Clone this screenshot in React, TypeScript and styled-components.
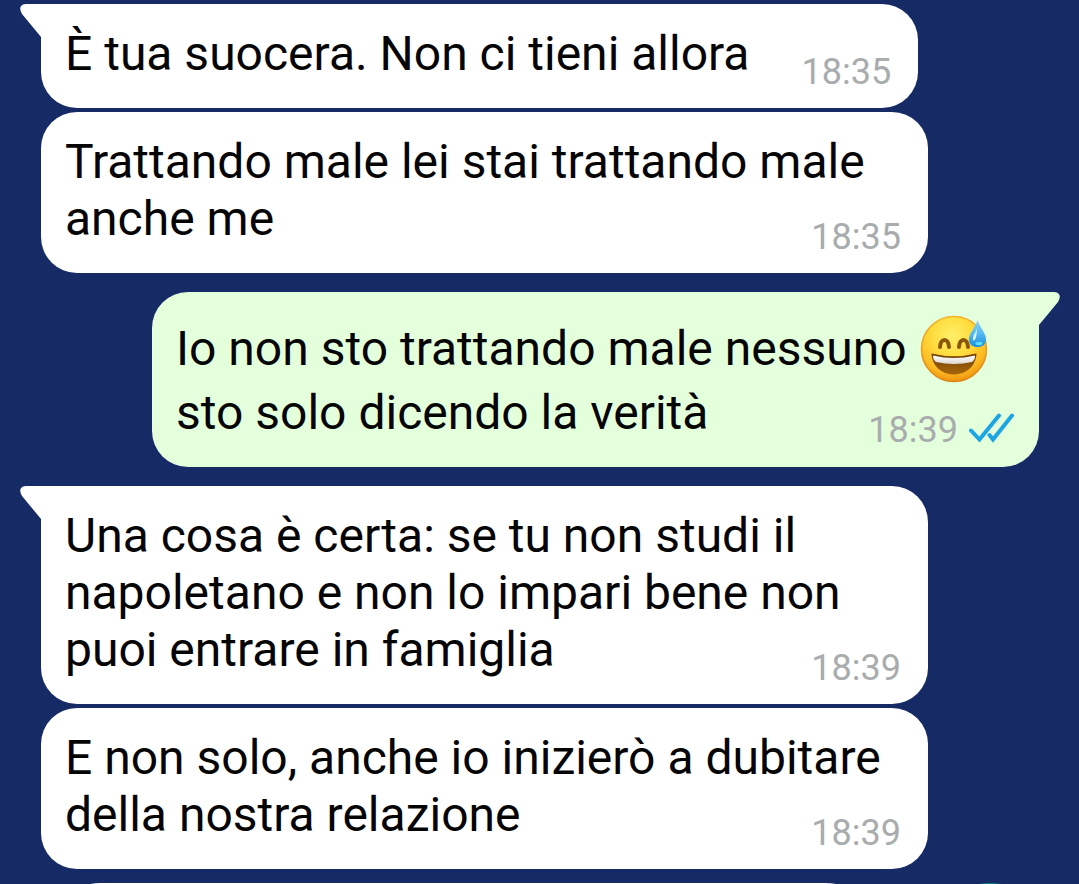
import React from "react";
import styled, { createGlobalStyle, css } from "styled-components";

const GlobalStyle = createGlobalStyle`
  *, *::before, *::after { box-sizing: border-box; }
  body {
    margin: 0;
    background: #162a66;
    font-family: Roboto, "Liberation Sans", sans-serif;
  }
`;

const Screen = styled.div`
  display: flex;
  flex-direction: column;
  height: 100vh;
  overflow: hidden;
  background: #162a66;
`;

const Conversation = styled.main`
  display: flex;
  flex: none;
  flex-direction: column;
  gap: 19px;
  padding: 4px 40px 14px 41px;
`;

const Group = styled.section<{ $sent?: boolean }>`
  display: flex;
  flex-direction: column;
  align-items: ${(p) => (p.$sent ? "flex-end" : "flex-start")};
  gap: 4px;
`;

const Bubble = styled.article<{ $sent?: boolean; $tail?: boolean }>`
  position: relative;
  max-width: calc(100% - 111px);
  padding: ${(p) => (p.$sent ? "25px 25px 16px 24px" : "21px 27px 15px 24px")};
  border-radius: 36px;
  background: ${(p) => (p.$sent ? "#e4ffdc" : "#ffffff")};
  ${(p) =>
    p.$tail &&
    (p.$sent
      ? css`
          border-top-right-radius: 0;
        `
      : css`
          border-top-left-radius: 0;
        `)}
`;

const Tail = styled.svg<{ $sent?: boolean }>`
  position: absolute;
  top: 0;
  ${(p) => (p.$sent ? "left: calc(100% - 1px);" : "right: calc(100% - 1px);")}
  width: 22px;
  height: 34px;
`;

const Text = styled.p<{ $tall?: boolean }>`
  margin: 0;
  color: #050505;
  font-size: 48px;
  line-height: ${(p) => (p.$tall ? 64 : 57)}px;
`;

/* Floats beside the last line of text, slightly below its baseline. */
const Meta = styled.span<{ $sent?: boolean }>`
  display: flex;
  float: right;
  align-items: center;
  gap: 10px;
  height: 42px;
  margin-top: ${(p) => (p.$sent ? 28 : 26)}px;
  margin-left: 52px;
  color: #a9acad;
  font-size: 36px;
  line-height: 42px;
`;

const Ticks = styled.svg`
  width: 46px;
  height: 30px;
  margin-bottom: 4px;
`;

const Emoji = styled.svg`
  width: 68px;
  height: 68px;
  margin: -10px 0 -10px 2px;
  vertical-align: -8px;
`;

const Composer = styled.form`
  display: flex;
  flex: none;
  align-items: flex-start;
  gap: 40px;
  padding: 0 24px 24px 41px;
`;

const MessageInput = styled.input`
  flex: 1;
  min-width: 0;
  height: 120px;
  padding: 0 40px;
  border: 0;
  border-radius: 60px;
  background: #ffffff;
  font: 48px Roboto, sans-serif;
`;

const MicButton = styled.button`
  flex: none;
  width: 130px;
  height: 130px;
  border: 0;
  border-radius: 50%;
  background: #0b7f7b;
`;

function BubbleTail({ sent }: { sent?: boolean }) {
  return (
    <Tail $sent={sent} viewBox="0 0 22 34" aria-hidden="true">
      {sent ? (
        <path d="M0 0H16Q20 0 21.500 3Q22.500 6 20 10L1 33V34H0Z" fill="#e4ffdc" />
      ) : (
        <path d="M22 0H6Q2 0 .5 3Q-.5 6 2 10L21 33V34H22Z" fill="#ffffff" />
      )}
    </Tail>
  );
}

function ReadTicks() {
  return (
    <Ticks viewBox="0 0 46 30" role="img" aria-label="Letto">
      <g fill="none" stroke="#1ca5e3" strokeWidth="4" strokeLinecap="round" strokeLinejoin="miter">
        <path d="M3 17.500L11.500 26.500L31 2.500" />
        <path d="M21.500 22L25 26.500L44 2.500" />
      </g>
    </Ticks>
  );
}

function SweatSmile() {
  return (
    <Emoji viewBox="0 0 68 68" role="img" aria-label="😅">
      <defs>
        <radialGradient id="face" cx="0.47" cy="0.3" r="0.72">
          <stop offset="0" stopColor="#fff06a" />
          <stop offset="0.45" stopColor="#ffdb3c" />
          <stop offset="0.78" stopColor="#fdb922" />
          <stop offset="1" stopColor="#ee8d0c" />
        </radialGradient>
        <linearGradient id="rim" x1="0" y1="0" x2="0" y2="1">
          <stop offset="0" stopColor="#f3b32b" />
          <stop offset="1" stopColor="#dd8413" />
        </linearGradient>
        <linearGradient id="mouth" x1="0" y1="0" x2="0" y2="1">
          <stop offset="0" stopColor="#6f3d05" />
          <stop offset="1" stopColor="#a8670c" />
        </linearGradient>
        <linearGradient id="teeth" x1="0" y1="0" x2="0" y2="1">
          <stop offset="0" stopColor="#ffffff" />
          <stop offset="1" stopColor="#dcd6d2" />
        </linearGradient>
        <linearGradient id="drop" x1="0" y1="0" x2="0" y2="1">
          <stop offset="0" stopColor="#8ed3f5" />
          <stop offset="0.5" stopColor="#55b9f2" />
          <stop offset="1" stopColor="#168fe0" />
        </linearGradient>
      </defs>
      <circle cx="34" cy="34" r="32.500" fill="url(#face)" stroke="url(#rim)" strokeWidth="1.500" />
      <g fill="none" stroke="#8a570b" strokeWidth="4" strokeLinecap="round">
        <path d="M20 32C20.500 22.500 28.500 22.500 29 32" />
        <path d="M39 32C39.500 22.500 47.500 22.500 48 32" />
      </g>
      <path d="M11.500 38.500Q34 44 56.500 38.500C56 50.500 47 59.500 34 59.500S12 50.500 11.500 38.500Z" fill="url(#mouth)" />
      <path d="M13 40.500Q34 45.500 55 40.500Q55 45 52 47Q34 51 16 47Q13 45 13 40.500Z" fill="url(#teeth)" />
      <path d="M57.500 5C60 12.500 66 18 66 24.500C66 29.500 62.500 32 57.500 32S49 29.500 49 24.500C49 18 55.500 12.500 57.500 5Z" fill="url(#drop)" />
      <path d="M57 13C56 18 52.500 20 53 25C55 27 57 22 57 13Z" fill="#d4f3ff" />
      <ellipse cx="59" cy="28.500" rx="3.500" ry="1.800" fill="#5ce0f5" />
    </Emoji>
  );
}

interface MessageProps {
  time: string;
  sent?: boolean;
  tail?: boolean;
  children: React.ReactNode;
}

function Message({ time, sent, tail, children }: MessageProps) {
  return (
    <Bubble $sent={sent} $tail={tail}>
      {tail && <BubbleTail sent={sent} />}
      <Text $tall={sent}>
        {children}
        <Meta $sent={sent}>
          <time>{time}</time>
          {sent && <ReadTicks />}
        </Meta>
      </Text>
    </Bubble>
  );
}

export default function App() {
  return (
    <Screen>
      <GlobalStyle />
      <Conversation>
        <Group>
          <Message time="18:35" tail>È tua suocera. Non ci tieni allora</Message>
          <Message time="18:35">Trattando male lei stai trattando male anche me</Message>
        </Group>
        <Group $sent>
          <Message time="18:39" sent tail>
            Io non sto trattando male nessuno <SweatSmile /> sto solo dicendo la verità
          </Message>
        </Group>
        <Group>
          <Message time="18:39" tail>
            Una cosa è certa: se tu non studi il napoletano e non lo impari bene non puoi entrare in famiglia
          </Message>
          <Message time="18:39">E non solo, anche io inizierò a dubitare della nostra relazione</Message>
        </Group>
      </Conversation>
      <Composer>
        <MessageInput type="text" aria-label="Messaggio" />
        <MicButton type="button" aria-label="Messaggio vocale" />
      </Composer>
    </Screen>
  );
}
